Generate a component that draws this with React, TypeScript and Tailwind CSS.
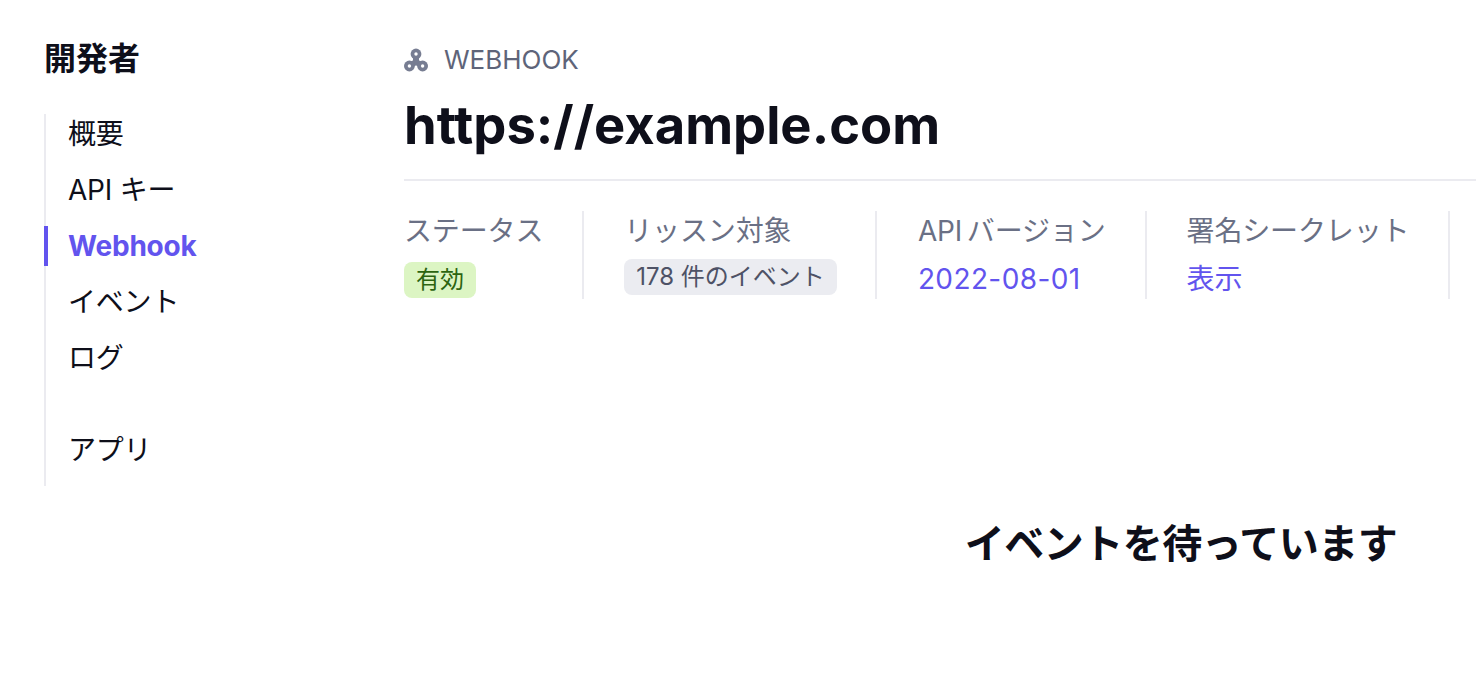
import React from 'react';

const FONT = "font-['Inter','Noto_Sans_CJK_JP',sans-serif]";

const navItems = [
  { label: '概要', active: false },
  { label: 'API キー', active: false },
  { label: 'Webhook', active: true },
  { label: 'イベント', active: false },
  { label: 'ログ', active: false },
];

const WebhookIcon = () => (
  <svg width="24" height="24" viewBox="0 0 24 24" fill="#777d92">
    <path d="M12 6v8M12 14l-7 4M12 14l7 4" stroke="#777d92" strokeWidth="6" />
    <circle cx="12" cy="6" r="5.4" />
    <circle cx="5.4" cy="18" r="5.4" />
    <circle cx="18.6" cy="18" r="5.4" />
    <circle cx="12" cy="6" r="1.7" fill="#fff" />
    <circle cx="5.4" cy="18" r="1.7" fill="#fff" />
    <circle cx="18.6" cy="18" r="1.7" fill="#fff" />
  </svg>
);

const Stat = ({ label, pad, children }: { label: string; pad: string; children: React.ReactNode }) => (
  <div className={`flex h-[88px] flex-col border-r-2 border-[#ebebf0] ${pad}`}>
    <span className="text-[28px] leading-[40px] tracking-[-0.15px] text-[#6a7085] whitespace-nowrap [word-spacing:-3px]">{label}</span>
    <div className="mt-[8px]">{children}</div>
  </div>
);

export default function App() {
  return (
    <div className={`${FONT} flex h-[680px] w-[1476px] overflow-hidden bg-white text-[#0e0f1a]`}>
      <aside className="w-[404px] shrink-0 pl-[44px] pt-[37px]">
        <h2 className="text-[32px] font-bold leading-[44px]">開発者</h2>
        <nav className="mt-[33px] flex w-[316px] flex-col border-l-2 border-[#ebebf0]">
          {navItems.map((item) => (
            <a
              key={item.label}
              className={`relative mb-[16px] pl-[22px] text-[28px] leading-[40px] tracking-[-0.2px] ${item.active ? 'font-bold text-[#6254ee]' : 'text-[#0e0f1a]'}`}
            >
              {item.active && <span className="absolute left-[-2px] top-0 h-[40px] w-[4px] bg-[#6254ee]" />}
              {item.label}
            </a>
          ))}
          <a className="mb-[16px] mt-[36px] pl-[22px] text-[28px] leading-[40px] tracking-[-0.2px]">アプリ</a>
        </nav>
      </aside>
      <main className="w-[1554px] shrink-0 pt-[42px]">
        <div className="flex items-center gap-[16px] text-[26px] leading-[36px] text-[#5e6479]">
          <WebhookIcon />
          <span>WEBHOOK</span>
        </div>
        <h1 className="mt-[11px] text-[52.5px] font-bold leading-[72px]">https://example.com</h1>
        <div className="mt-[18px] border-t-2 border-[#ebebf0] pt-[30px]">
          <div className="flex">
            <Stat label="ステータス" pad="pr-[39px]">
              <span className="mt-[3px] inline-block rounded-[8px] bg-[#dcf5c3] px-[12px] text-[24px] leading-[36px] text-[#2c6410]">有効</span>
            </Stat>
            <Stat label="リッスン対象" pad="pl-[40px] pr-[38px]">
              <span className="inline-block rounded-[8px] bg-[#ebecf1] px-[12px] text-[24px] leading-[36px] text-[#4e5266]">178 件のイベント</span>
            </Stat>
            <Stat label="API バージョン" pad="pl-[41px] pr-[39px]">
              <span className="text-[28px] leading-[40px] tracking-[0.4px] text-[#6254ee]">2022-08-01</span>
            </Stat>
            <Stat label="署名シークレット" pad="pl-[40px] pr-[39px]">
              <span className="text-[28px] leading-[40px] text-[#6254ee]">表示</span>
            </Stat>
          </div>
        </div>
        <div className="mt-[219px] text-center text-[40px] font-bold leading-[52px] tracking-[-0.5px]">イベントを待っています</div>
      </main>
    </div>
  );
}
